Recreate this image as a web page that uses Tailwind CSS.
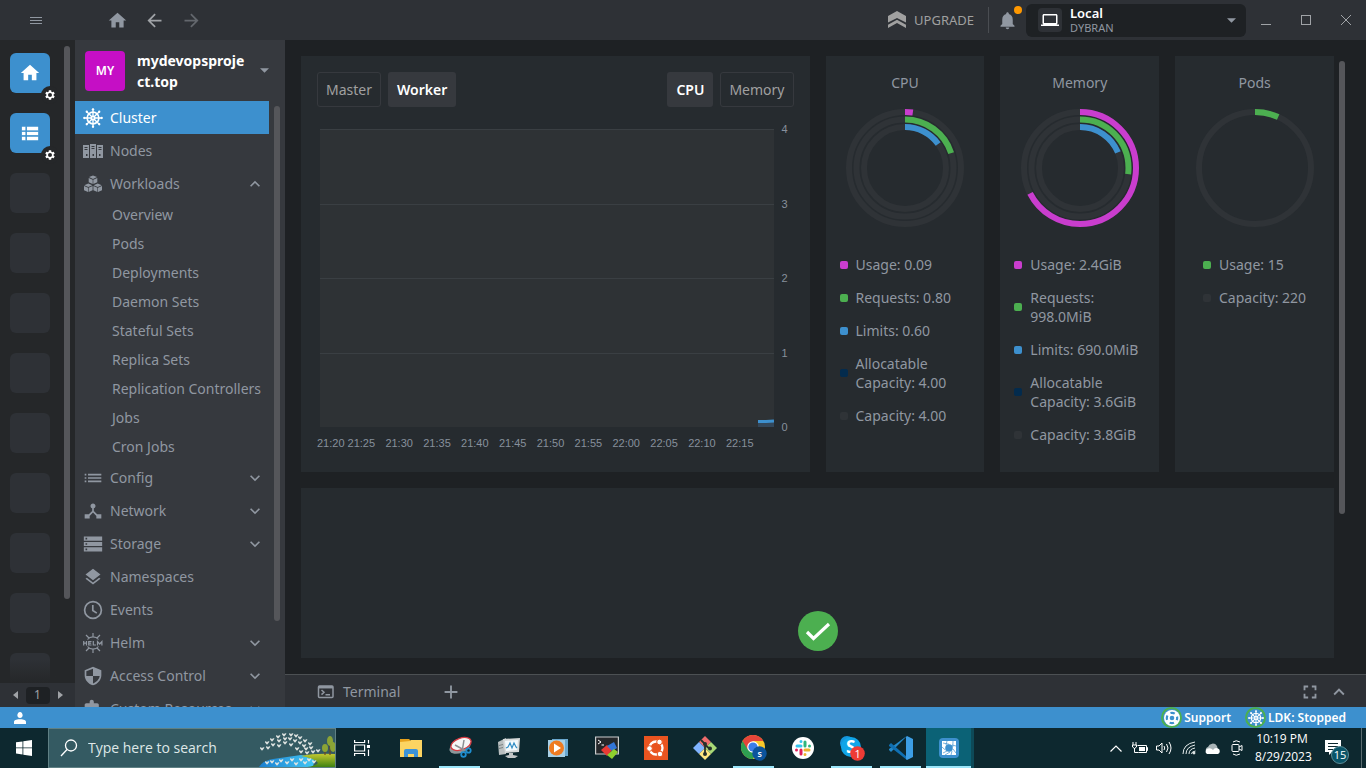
<!DOCTYPE html>
<html lang="en">
<head>
<meta charset="utf-8">
<title>Lens - mydevopsproject.top</title>
<script src="https://cdn.jsdelivr.net/npm/@tailwindcss/browser@4"></script>
</head>
<body class="flex h-screen flex-col overflow-hidden bg-[#1e2124] font-['Noto_Sans',sans-serif] text-sm text-[#9097a1]">

<svg class="hidden" aria-hidden="true">
  <symbol id="home" viewBox="0 0 24 24"><path d="M10 20v-6h4v6h5v-8h3L12 3 2 12h3v8z"/></symbol>
  <symbol id="gear" viewBox="0 0 24 24"><path fill-rule="evenodd" d="M19.14 12.94c.04-.3.06-.61.06-.94 0-.32-.02-.64-.07-.94l2.03-1.58c.18-.14.23-.41.12-.61l-1.92-3.32c-.12-.22-.37-.29-.59-.22l-2.39.96c-.5-.38-1.03-.7-1.62-.94l-.36-2.54c-.04-.24-.24-.41-.48-.41h-3.84c-.24 0-.43.17-.47.41l-.36 2.54c-.59.24-1.13.57-1.62.94l-2.39-.96c-.22-.08-.47 0-.59.22L2.74 8.87c-.12.21-.08.47.12.61l2.03 1.58c-.05.3-.09.63-.09.94s.02.64.07.94l-2.03 1.58c-.18.14-.23.41-.12.61l1.92 3.32c.12.22.37.29.59.22l2.39-.96c.5.38 1.03.7 1.62.94l.36 2.54c.05.24.24.41.48.41h3.84c.24 0 .44-.17.47-.41l.36-2.54c.59-.24 1.13-.56 1.62-.94l2.39.96c.22.08.47 0 .59-.22l1.92-3.32c.12-.22.07-.47-.12-.61l-2.01-1.58zM12 16a4 4 0 1 0 0-8 4 4 0 0 0 0 8z"/></symbol>
  <symbol id="list-view" viewBox="0 0 24 24"><path d="M4 14h4v-4H4v4zm0 5h4v-4H4v4zM4 9h4V5H4v4zm5 5h12v-4H9v4zm0 5h12v-4H9v4zM9 5v4h12V5H9z"/><path class="stroke-[#3d90ce]" stroke-width="1.200" d="M4 9.500h17M4 14.500h17M8.500 5v14"/></symbol>
  <symbol id="down" viewBox="0 0 24 24"><path d="M7.41 8.59L12 13.17l4.59-4.58L18 10l-6 6-6-6 1.41-1.41z"/></symbol>
  <symbol id="up" viewBox="0 0 24 24"><path d="M7.41 15.41L12 10.83l4.59 4.58L18 14l-6-6-6 6z"/></symbol>
  <symbol id="caret" viewBox="0 0 8 4"><path d="M0 0h8L4 4z"/></symbol>
  <symbol id="wheel" viewBox="0 0 24 24">
    <g fill="none" stroke="currentColor" stroke-width="2"><circle cx="12" cy="12" r="7"/><circle cx="12" cy="12" r="2"/>
    <path stroke-width="1.600" d="M12 1v9M12 14v9M1 12h9M14 12h9M4.200 4.200l6.400 6.400M13.400 13.400l6.400 6.400M19.800 4.200l-6.400 6.400M10.600 13.400l-6.400 6.400"/></g>
    <g><circle cx="12" cy="1.600" r="1.400"/><circle cx="12" cy="22.400" r="1.400"/><circle cx="1.600" cy="12" r="1.400"/><circle cx="22.400" cy="12" r="1.400"/><circle cx="4.500" cy="4.500" r="1.400"/><circle cx="19.500" cy="4.500" r="1.400"/><circle cx="4.500" cy="19.500" r="1.400"/><circle cx="19.500" cy="19.500" r="1.400"/></g>
  </symbol>
</svg>

<header class="flex h-10 shrink-0 items-center bg-[#2e3136] text-[#9097a1]">
  <button aria-label="Menu" class="ml-[30px] flex size-3 flex-col justify-center gap-[2px]"><span class="h-px w-full bg-current"></span><span class="h-px w-full bg-current"></span><span class="h-px w-full bg-current"></span></button>
  <button aria-label="Home" class="ml-[65px]"><svg class="size-[21px] fill-current"><use href="#home"/></svg></button>
  <button aria-label="Back" class="ml-4 text-[#a0a3a7]"><svg class="size-[21px] fill-current" viewBox="0 0 24 24"><path d="M20 11H7.830l5.590-5.590L12 4l-8 8 8 8 1.410-1.410L7.830 13H20v-2z"/></svg></button>
  <button aria-label="Forward" class="ml-4 text-[#63676d]"><svg class="size-[21px] fill-current" viewBox="0 0 24 24"><path d="M12 4l-1.410 1.410L16.170 11H4v2h12.170l-5.580 5.590L12 20l8-8z"/></svg></button>
  <div class="flex-1"></div>
  <button class="flex items-center gap-2 text-[13px] text-[#a0a0a0]"><svg class="size-[18px] fill-current" viewBox="0 0 18 18"><path d="M9 0l9 5v6.500L9 7l-9 4.500V5zM9 8.800l9 5V17l-9-5-9 5v-3.200z"/></svg>UPGRADE</button>
  <div class="ml-3.5 h-[26px] w-px bg-[#4a4d52]"></div>
  <button aria-label="Notifications" class="relative ml-2"><svg class="size-[21px] fill-current" viewBox="0 0 24 24"><path d="M12 22c1.100 0 2-.9 2-2h-4c0 1.100.890 2 2 2zm6-6v-5c0-3.070-1.640-5.640-4.500-6.320V4c0-.830-.670-1.500-1.500-1.500s-1.500.670-1.500 1.500v.680C7.630 5.360 6 7.920 6 11v5l-2 2v1h16v-1l-2-2z"/></svg><span class="absolute -top-1 right-[-4px] size-2 rounded-full bg-[#ff9800]"></span></button>
  <button class="ml-2 flex h-[33px] w-[220px] items-center rounded-md bg-[#1e2124] pr-2.5 pl-3 text-left">
    <span class="flex size-6 items-center justify-center rounded bg-[#2e3136] text-white"><svg class="size-[18px] fill-current" viewBox="0 0 24 24"><path d="M20 18c1.100 0 2-.9 2-2V6c0-1.100-.9-2-2-2H4c-1.100 0-2 .9-2 2v10c0 1.100.9 2 2 2H0v2h24v-2h-4zM4 6h16v10H4V6z"/></svg></span>
    <span class="ml-2 flex-1"><span class="block text-[13px] leading-4 font-semibold text-white">Local</span><span class="block text-[11px] leading-[14px]">DYBRAN</span></span>
    <svg class="h-[5px] w-[9px] fill-current"><use href="#caret"/></svg>
  </button>
  <button aria-label="Minimize" class="ml-[15px] flex size-2.5 items-end"><span class="h-px w-full bg-[#a0a3a7]"></span></button>
  <button aria-label="Maximize" class="ml-[30px] size-2.5 border border-[#a0a3a7]"></button>
  <button aria-label="Close" class="mr-[15px] ml-[30px]"><svg class="size-2.5 stroke-[#a0a3a7]" viewBox="0 0 10 10"><path d="M0 0l10 10M10 0L0 10"/></svg></button>
</header>

<div class="flex min-h-0 flex-1">
  <aside class="flex w-[75px] shrink-0 flex-col bg-[#252729]">
    <div class="flex min-h-0 flex-1 justify-between overflow-hidden pr-[5px] pl-2.5">
      <div class="relative flex flex-col gap-5 overflow-hidden pt-[13px] pr-[7px]">
        <div class="relative size-10 shrink-0"><button aria-label="Catalog" class="flex size-10 items-center justify-center rounded-md bg-[#3d90ce] text-white"><svg class="size-[22px] fill-current"><use href="#home"/></svg></button><span class="absolute right-[-9px] bottom-[-11px] flex size-[18px] items-center justify-center rounded-full bg-[#252729]"><svg class="size-3 fill-white"><use href="#gear"/></svg></span></div>
        <div class="relative size-10 shrink-0"><button aria-label="Cluster list" class="flex size-10 items-center justify-center rounded-md bg-[#3d90ce] text-white"><svg class="size-[23px] fill-current" viewBox="0 0 24 24"><use href="#list-view" x="-1" width="24" height="24"/></svg></button><span class="absolute right-[-9px] bottom-[-11px] flex size-[18px] items-center justify-center rounded-full bg-[#252729]"><svg class="size-3 fill-white"><use href="#gear"/></svg></span></div>
        <div class="size-10 shrink-0 rounded-md bg-[#2e3136]"></div>
        <div class="size-10 shrink-0 rounded-md bg-[#2e3136]"></div>
        <div class="size-10 shrink-0 rounded-md bg-[#2e3136]"></div>
        <div class="size-10 shrink-0 rounded-md bg-[#2e3136]"></div>
        <div class="size-10 shrink-0 rounded-md bg-[#2e3136]"></div>
        <div class="size-10 shrink-0 rounded-md bg-[#2e3136]"></div>
        <div class="size-10 shrink-0 rounded-md bg-[#2e3136]"></div>
        <div class="size-10 shrink-0 rounded-md bg-[#2e3136]"></div>
        <div class="size-10 shrink-0 rounded-md bg-[#2e3136]"></div>
        <div class="absolute inset-x-0 bottom-0 h-6 bg-gradient-to-t from-[#252729] to-transparent"></div>
      </div>
      <div class="mt-1.5 h-[86%] w-1.5 rounded-full bg-[#55565a]"></div>
    </div>
    <div class="flex h-6 items-center justify-center gap-2 bg-[#2e3136] text-[#a0a3a7]">
      <button aria-label="Previous"><svg class="h-2 w-[5px] fill-current" viewBox="0 0 5 8"><path d="M5 0v8L0 4z"/></svg></button>
      <span class="flex h-[17px] w-6 items-center justify-center rounded bg-[#1e2124] text-xs">1</span>
      <button aria-label="Next"><svg class="h-2 w-[5px] fill-current" viewBox="0 0 5 8"><path d="M0 0v8l5-4z"/></svg></button>
    </div>
  </aside>

  <nav class="flex w-[210px] shrink-0 flex-col bg-[#36393e]">
    <button class="flex h-[61px] shrink-0 items-center px-2.5 text-left text-white">
      <span class="flex size-10 items-center justify-center rounded bg-[#c50fc5] text-xs font-semibold">MY</span>
      <span class="ml-3 w-[112px] text-sm leading-[21px] font-bold break-all">mydevopsproject.top</span>
      <svg class="ml-[11px] h-[5px] w-[9px] fill-[#9097a1]"><use href="#caret"/></svg>
    </button>
    <div class="flex min-h-0 flex-1 justify-between overflow-hidden pr-[5px]">
      <div class="w-[194px]">
        <a href="#" class="flex h-[33px] items-center bg-[#3d90ce] px-2 text-white"><svg class="size-5 fill-current"><use href="#wheel"/></svg><span class="ml-[7px]">Cluster</span></a>
        <a href="#" class="flex h-[33px] items-center px-2"><svg class="size-5 fill-current" viewBox="0 0 20 20"><path fill-rule="evenodd" d="M0 4h6v13H0zM7 3h6v14H7zM14 4h6v13h-6zM1.500 6v1h3V6zM1.500 8v1h3V8zM8.500 5v1h3V5zM8.500 7v1h3V7zM15.500 6v1h3V6zM15.500 8v1h3V8zM3 13v2h1.500v-2zM9.500 13v2H11v-2zM16 13v2h1.500v-2z"/></svg><span class="ml-[7px]">Nodes</span></a>
        <a href="#" class="flex h-[33px] items-center px-2"><svg class="size-5 fill-current" viewBox="0 0 20 20"><path d="M10 1.500l4 1.600-4 1.800-4-1.800zM5.700 4l4 1.800v4.300l-4-1.800zM14.300 4l-4 1.800v4.300l4-1.800zM5.300 9.500l4 1.700-4 1.800-4-1.800zM1 12l4 1.800V18l-4-1.800zM9.600 12l-4 1.800V18l4-1.800zM14.700 9.500l4 1.700-4 1.800-4-1.800zM10.400 12l4 1.800V18l-4-1.800zM19 12l-4 1.800V18l4-1.800z"/></svg><span class="ml-[7px] flex-1">Workloads</span><svg class="mr-[-4px] size-5 fill-current"><use href="#up"/></svg></a>
        <div class="flex flex-col pl-[37px] whitespace-nowrap">
          <a href="#" class="h-[29px] leading-[29px]">Overview</a>
          <a href="#" class="h-[29px] leading-[29px]">Pods</a>
          <a href="#" class="h-[29px] leading-[29px]">Deployments</a>
          <a href="#" class="h-[29px] leading-[29px]">Daemon Sets</a>
          <a href="#" class="h-[29px] leading-[29px]">Stateful Sets</a>
          <a href="#" class="h-[29px] leading-[29px]">Replica Sets</a>
          <a href="#" class="h-[29px] leading-[29px]">Replication Controllers</a>
          <a href="#" class="h-[29px] leading-[29px]">Jobs</a>
          <a href="#" class="h-[29px] leading-[29px]">Cron Jobs</a>
        </div>
        <a href="#" class="flex h-[33px] items-center px-2"><svg class="size-5 fill-current" viewBox="0 0 24 24"><path d="M2 13h2v-2H2v2zm0 4h2v-2H2v2zm0-8h2V7H2v2zm4 4h16v-2H6v2zm0 4h16v-2H6v2zM6 7v2h16V7H6z"/></svg><span class="ml-[7px] flex-1">Config</span><svg class="mr-[-4px] size-5 fill-current"><use href="#down"/></svg></a>
        <a href="#" class="flex h-[33px] items-center px-2"><svg class="size-5 fill-current" viewBox="0 0 24 24"><path d="M17 16l-4-4V8.820C14.160 8.400 15 7.300 15 6c0-1.660-1.340-3-3-3S9 4.340 9 6c0 1.300.840 2.400 2 2.820V12l-4 4H2v5h6v-3.050l4-4.200 4 4.200V21h6v-5h-5z"/></svg><span class="ml-[7px] flex-1">Network</span><svg class="mr-[-4px] size-5 fill-current"><use href="#down"/></svg></a>
        <a href="#" class="flex h-[33px] items-center px-2"><svg class="size-5 fill-current" viewBox="0 0 24 24"><path fill-rule="evenodd" d="M1 21h22v-5H1v5zm2-3.500h2v2H3v-2zM1 3v5h22V3H1zm4 3.500H3v-2h2v2zM1 14.500h22v-5H1v5zM3 11h2v2H3v-2z"/></svg><span class="ml-[7px] flex-1">Storage</span><svg class="mr-[-4px] size-5 fill-current"><use href="#down"/></svg></a>
        <a href="#" class="flex h-[33px] items-center px-2"><svg class="size-5 fill-current" viewBox="0 0 24 24"><path d="M11.990 18.540l-7.370-5.730L3 14.070l9 7 9-7-1.630-1.270-7.380 5.740zM12 16l7.360-5.730L21 9l-9-7-9 7 1.630 1.270L12 16z"/></svg><span class="ml-[7px]">Namespaces</span></a>
        <a href="#" class="flex h-[33px] items-center px-2"><svg class="size-5" viewBox="0 0 20 20" fill="none" stroke="currentColor" stroke-width="1.700"><circle cx="10" cy="10" r="8.400"/><path d="M9.800 5v5.500l4 2.600"/></svg><span class="ml-[7px]">Events</span></a>
        <a href="#" class="flex h-[33px] items-center px-2"><svg class="size-5" viewBox="0 0 20 20" fill="none" stroke="currentColor" stroke-width="1.200"><path d="M4.500 6.500a7 7 0 0 1 11 0M4.500 13.500a7 7 0 0 0 11 0M10 0v4M10 16v4M3 2l3 3M17 2l-3 3M3 18l3-3M17 18l-3-3M.700 8v4.500M3.500 8v4.500M.700 10.200h2.800M8.500 8.500H5.700v3.500h2.800M5.700 10.200h2.500M10.300 8v4h2.700M14.500 12.500V8.500l2.200 2.500 2.200-2.500v4"/></svg><span class="ml-[7px] flex-1">Helm</span><svg class="mr-[-4px] size-5 fill-current"><use href="#down"/></svg></a>
        <a href="#" class="flex h-[33px] items-center px-2"><svg class="size-5 fill-current" viewBox="0 0 24 24"><path d="M12 1L2 5v6c0 5.550 4.340 10.740 10 12 5.660-1.260 10-6.450 10-12V5L12 1zm0 10.990h8c-.530 4.120-4.280 7.790-8 8.940V12H4V6.300l8-3.110v8.800z"/></svg><span class="ml-[7px] flex-1">Access Control</span><svg class="mr-[-4px] size-5 fill-current"><use href="#down"/></svg></a>
        <a href="#" class="flex h-[33px] items-center px-2"><svg class="size-5 fill-current" viewBox="0 0 24 24"><path d="M20.500 11H19V7c0-1.100-.9-2-2-2h-4V3.500C13 2.120 11.880 1 10.500 1S8 2.120 8 3.500V5H4c-1.100 0-1.990.9-1.990 2v3.800H3.500c1.490 0 2.700 1.210 2.700 2.700s-1.210 2.700-2.700 2.700H2V20c0 1.100.9 2 2 2h15v-6h1.500c1.380 0 2.500-1.120 2.500-2.500S21.880 11 20.500 11z"/></svg><span class="ml-[7px] flex-1">Custom Resources</span><svg class="mr-[-4px] size-5 fill-current"><use href="#down"/></svg></a>
      </div>
      <div class="mt-[5px] h-[85%] w-1.5 rounded-full bg-[#55565a]"></div>
    </div>
  </nav>

  <div class="flex min-w-0 flex-1 flex-col">
    <main class="flex min-h-0 flex-1 overflow-hidden">
      <div class="flex min-w-0 flex-1 flex-col gap-4 py-4 pl-4">
        <div class="grid h-[416px] shrink-0 grid-cols-2 gap-4">
          <section class="flex flex-col bg-[#262b2f] p-4">
            <div class="flex gap-[7px] text-[#a0a0a0]">
              <button class="h-[35px] rounded-[3px] border border-[#36393e] px-2">Master</button>
              <button class="h-[35px] rounded-[3px] bg-[#36393e] px-[9px] font-semibold text-white">Worker</button>
              <span class="flex-1"></span>
              <button class="h-[35px] rounded-[3px] bg-[#36393e] px-[9px] font-semibold text-white">CPU</button>
              <button class="h-[35px] rounded-[3px] border border-[#36393e] px-2">Memory</button>
            </div>
            <div class="mt-[22px] flex h-[298px] pl-[3px] font-['Liberation_Sans',sans-serif] text-[11px] text-[#87909c]">
              <div class="flex flex-1 flex-col bg-[#2e3235]">
                <div class="flex-1 border-t border-[#3a3f43]"></div>
                <div class="flex-1 border-t border-[#3a3f43]"></div>
                <div class="flex-1 border-t border-[#3a3f43]"></div>
                <div class="flex flex-1 items-end justify-end border-t border-[#3a3f43]">
                  <svg class="h-2 w-4" viewBox="0 0 16 8"><path fill="#33475a" d="M0 3h16v5H0z"/><path fill="none" stroke="#3d90ce" stroke-width="3" d="M0 2.500h8L16 2"/></svg>
                </div>
              </div>
              <div class="-my-1.5 ml-2 flex w-3 flex-col justify-between leading-3"><span>4</span><span>3</span><span>2</span><span>1</span><span>0</span></div>
            </div>
            <div class="mt-[9px] flex gap-[3px] pr-10 font-['Liberation_Sans',sans-serif] text-[11px] leading-[14px] text-[#87909c]">
              <span>21:20</span>
              <div class="flex flex-1 justify-between"><span>21:25</span><span>21:30</span><span>21:35</span><span>21:40</span><span>21:45</span><span>21:50</span><span>21:55</span><span>22:00</span><span>22:05</span><span>22:10</span><span>22:15</span></div>
            </div>
          </section>

          <div class="grid grid-cols-3 gap-4">
            <section class="flex flex-col items-center bg-[#262b2f] px-3.5 pt-[17px]">
              <h2 class="leading-5">CPU</h2>
              <svg class="mt-4 size-[118px]" viewBox="0 0 118 118" fill="none" stroke-width="6"><g stroke="#2f3337"><circle cx="59" cy="59" r="56"/><circle cx="59" cy="59" r="48.500"/><circle cx="59" cy="59" r="41"/></g><g transform="rotate(-90 59 59)"><circle cx="59" cy="59" r="56" stroke="#c93dce" pathLength="100" stroke-dasharray="2.250 100"/><circle cx="59" cy="59" r="48.500" stroke="#4caf50" pathLength="100" stroke-dasharray="20 100"/><circle cx="59" cy="59" r="41" stroke="#3d90ce" pathLength="100" stroke-dasharray="15 100"/></g></svg>
              <ul class="mt-7 flex w-full flex-col gap-3.5 leading-[19px]">
                <li class="flex items-center gap-2"><span class="size-2 shrink-0 rounded-[2px] bg-[#c93dce]"></span>Usage: 0.09</li>
                <li class="flex items-center gap-2"><span class="size-2 shrink-0 rounded-[2px] bg-[#4caf50]"></span>Requests: 0.80</li>
                <li class="flex items-center gap-2"><span class="size-2 shrink-0 rounded-[2px] bg-[#3d90ce]"></span>Limits: 0.60</li>
                <li class="flex items-center gap-2"><span class="size-2 shrink-0 rounded-[2px] bg-[#032b4d]"></span>Allocatable Capacity: 4.00</li>
                <li class="flex items-center gap-2"><span class="size-2 shrink-0 rounded-[2px] bg-[#2f3337]"></span>Capacity: 4.00</li>
              </ul>
            </section>
            <section class="flex flex-col items-center bg-[#262b2f] px-3.5 pt-[17px]">
              <h2 class="leading-5">Memory</h2>
              <svg class="mt-4 size-[118px]" viewBox="0 0 118 118" fill="none" stroke-width="6"><g stroke="#2f3337"><circle cx="59" cy="59" r="56"/><circle cx="59" cy="59" r="48.500"/><circle cx="59" cy="59" r="41"/></g><g transform="rotate(-90 59 59)"><circle cx="59" cy="59" r="56" stroke="#c93dce" pathLength="100" stroke-dasharray="67.500 100"/><circle cx="59" cy="59" r="48.500" stroke="#4caf50" pathLength="100" stroke-dasharray="27 100"/><circle cx="59" cy="59" r="41" stroke="#3d90ce" pathLength="100" stroke-dasharray="18.800 100"/></g></svg>
              <ul class="mt-7 flex w-full flex-col gap-3.5 leading-[19px]">
                <li class="flex items-center gap-2"><span class="size-2 shrink-0 rounded-[2px] bg-[#c93dce]"></span>Usage: 2.4GiB</li>
                <li class="flex items-center gap-2"><span class="size-2 shrink-0 rounded-[2px] bg-[#4caf50]"></span>Requests: 998.0MiB</li>
                <li class="flex items-center gap-2"><span class="size-2 shrink-0 rounded-[2px] bg-[#3d90ce]"></span>Limits: 690.0MiB</li>
                <li class="flex items-center gap-2"><span class="size-2 shrink-0 rounded-[2px] bg-[#032b4d]"></span>Allocatable Capacity: 3.6GiB</li>
                <li class="flex items-center gap-2"><span class="size-2 shrink-0 rounded-[2px] bg-[#2f3337]"></span>Capacity: 3.8GiB</li>
              </ul>
            </section>
            <section class="flex flex-col items-center bg-[#262b2f] px-3.5 pt-[17px]">
              <h2 class="leading-5">Pods</h2>
              <svg class="mt-4 size-[118px]" viewBox="0 0 118 118" fill="none" stroke-width="6"><circle cx="59" cy="59" r="56" stroke="#2f3337"/><circle cx="59" cy="59" r="56" stroke="#4caf50" pathLength="100" stroke-dasharray="6.800 100" transform="rotate(-90 59 59)"/></svg>
              <ul class="mt-7 flex flex-col gap-3.5 leading-[19px]">
                <li class="flex items-center gap-2"><span class="size-2 shrink-0 rounded-[2px] bg-[#4caf50]"></span>Usage: 15</li>
                <li class="flex items-center gap-2"><span class="size-2 shrink-0 rounded-[2px] bg-[#2f3337]"></span>Capacity: 220</li>
              </ul>
            </section>
          </div>
        </div>
        <section class="flex min-h-0 flex-1 items-end justify-center bg-[#262b2f] pb-[7px]">
          <svg class="size-10" viewBox="0 0 40 40"><circle cx="20" cy="20" r="20" fill="#4caf50"/><path d="M9 21l6.500 6.500L31 13" fill="none" stroke="#fff" stroke-width="3.200"/></svg>
        </section>
      </div>
      <div class="mt-[21px] mr-[21px] ml-[5px] h-[453px] w-1.5 rounded-full bg-[#55565a]"></div>
    </main>
    <div class="flex h-[33px] shrink-0 items-center border-t border-[#4c5053] bg-[#2e3136] pt-px">
      <button class="ml-8 flex items-center gap-2"><svg class="size-[18px]" viewBox="0 0 18 18" fill="none" stroke="currentColor" stroke-width="1.500"><rect x="1.500" y="3" width="14.500" height="11.500" rx="1"/><path stroke-width="2.500" d="M1.500 4.200H16"/><path d="M4.500 7L7 9.300 4.500 11.600M8.500 11.800H13"/></svg>Terminal</button>
      <button aria-label="New tab" class="ml-10"><svg class="size-[22px] fill-current" viewBox="0 0 24 24"><path d="M19 13h-6v6h-2v-6H5v-2h6V5h2v6h6v2z"/></svg></button>
      <span class="flex-1"></span>
      <button aria-label="Fullscreen"><svg class="size-[22px] fill-current" viewBox="0 0 24 24"><path d="M7 14H5v5h5v-2H7v-3zm-2-4h2V7h3V5H5v5zm12 7h-3v2h5v-5h-2v3zM14 5v2h3v3h2V5h-5z"/></svg></button>
      <button aria-label="Expand" class="mr-4 ml-[7px]"><svg class="size-[22px] fill-current"><use href="#up"/></svg></button>
    </div>
  </div>
</div>

<footer class="flex h-[21px] shrink-0 items-center bg-[#3d90ce] text-xs font-semibold text-white">
  <button aria-label="Account" class="ml-3"><svg class="size-4 fill-current" viewBox="0 0 24 24"><path d="M12 12c2.210 0 4-1.790 4-4s-1.790-5-4-5-4 2.790-4 5 1.790 4 4 4zm0 2c-2.670 0-9 .340-9 4v3h18v-3c0-3.660-6.330-4-9-4z"/></svg></button>
  <span class="flex-1"></span>
  <button class="flex items-center gap-0.5"><span class="flex size-[21px] items-center justify-center rounded-full border-2 border-[#4caf50]"><svg class="size-4" viewBox="0 0 16 16"><circle cx="8" cy="8" r="8" fill="#fff"/><circle cx="8" cy="8" r="5.200" fill="none" stroke="#3d90ce" stroke-width="2.200" stroke-dasharray="4.500 3.670" stroke-dashoffset="2.250"/><circle cx="8" cy="8" r="2.300" fill="#3d90ce"/></svg></span>Support</button>
  <button class="mr-5 ml-[14px] flex items-center gap-0.5"><span class="flex size-[21px] items-center justify-center rounded-full border-2 border-[#4caf50]"><svg class="size-4 fill-current"><use href="#wheel"/></svg></span>LDK: Stopped</button>
</footer>

<div class="flex h-10 shrink-0 bg-[#0d282f] font-['Open_Sans',sans-serif] text-white">
  <button aria-label="Start" class="flex w-12 items-center justify-center"><svg class="size-4 fill-white" viewBox="0 0 16 16"><path d="M0 2.300L6.500 1.400v6.100H0zM7.300 1.300L16 0v7.500H7.300zM0 8.300h6.500v6.200L0 13.600zM7.300 8.300H16V16l-8.700-1.300z"/></svg></button>
  <label class="flex w-72 items-center overflow-hidden border border-[#5f8084] bg-[#345a62]">
    <svg class="ml-[11px] size-[18px] shrink-0" viewBox="0 0 18 18" fill="none" stroke="#fff" stroke-width="1.300"><circle cx="11" cy="6.500" r="5.500"/><path d="M7 10.500L1 17"/></svg>
    <input aria-label="Search" placeholder="Type here to search" class="ml-2.5 min-w-0 flex-1 bg-transparent text-sm placeholder:text-[#dfe8e8]">
    <svg class="h-[38px] w-[76px] shrink-0" viewBox="0 0 76 38">
      <defs>
        <linearGradient id="hill" x2="0" y2="1"><stop stop-color="#c3c92f"/><stop offset="1" stop-color="#3f8212"/></linearGradient>
        <linearGradient id="lake"><stop stop-color="#1b7fd0"/><stop offset="1" stop-color="#43c8f5"/></linearGradient>
        <marker id="bird" markerUnits="userSpaceOnUse" markerWidth="6" markerHeight="6" refX="2.500" refY="2"><path fill="#dfe4e2" d="M0 .500l1.500-.2 1 1 1-1 1.500.2-1 1.500-1.500 1.800L1 2z"/></marker>
      </defs>
      <path fill="url(#lake)" d="M0 38q3-6 14-8l28-4 14 2-2 10z"/>
      <path fill="url(#hill)" d="M42 27q14-3 34-2v13H48q8-1 11-4-2-3-6-4-5-2-11-3z"/>
      <path stroke="#6d4a20" stroke-width="1.200" d="M71 26V14M66 26v-6"/>
      <g fill="#8ba435"><ellipse cx="71" cy="12" rx="3" ry="5"/><ellipse cx="66" cy="19" rx="3" ry="4"/><ellipse cx="74" cy="18" rx="3" ry="5"/></g>
      <polyline fill="none" marker-mid="url(#bird)" points="0,20 3,20 8,14 9,19 13,11 14,16 19,8 20,12 20,17 25,6 26,10 26,14 32,6 31,10 32,16 37,7 36,12 38,20 41,9 41,14 46,12 45,17 42,23 47,20 48,24 51,15 52,19 54,23 59,22 60,22"/>
      <polyline fill="none" marker-mid="url(#bird)" points="0,36 8,34 13,33 18,35 22,32 28,34 33,31 37,35 42,31 46,34 50,31 55,33 60,33"/>
    </svg>
  </label>
  <div class="ml-px flex">
    <button aria-label="Task view" class="flex w-[49px] items-center justify-center"><svg class="size-4" viewBox="0 0 16 16" fill="none" stroke="#fff" stroke-width="1.200"><path d="M.600 0v2.500h10V0M.600 16v-2.500h10V16M.600 5h10v6H.600zM14.500 0v3.500M14.500 9.500V16"/><path fill="#fff" d="M13.500 5.500h2v2h-2z"/></svg></button>
    <button aria-label="File Explorer" class="flex w-[49px] items-center justify-center"><svg class="h-5 w-[22px]" viewBox="0 0 22 20"><path fill="#e8a21c" d="M0 1h9l2 2v4H0z"/><path fill="#fcd462" d="M0 4l10-1 1-1h11v17H0z"/><path fill="#3c93d8" d="M4 19v-6q0-2 2-2h10q2 0 2 2v6h-4v-3H8v3z"/></svg></button>
    <button aria-label="Snipping Tool" class="relative flex w-[49px] items-center justify-center"><svg class="size-6" viewBox="0 0 24 24"><ellipse cx="12" cy="11" rx="11" ry="6" fill="#8d989b" transform="rotate(-20 12 11)"/><ellipse cx="13" cy="8" rx="10.500" ry="5.800" fill="#f5f5f5" stroke="#d73b42" stroke-width="1.300" transform="rotate(-20 13 8)"/><path d="M16 4l-2 12M7 9l11 6" stroke="#8b8f92" stroke-width="1.500"/><g fill="none" stroke="#1e8ed0" stroke-width="1.800"><circle cx="15.500" cy="18.500" r="2.300"/><circle cx="20.500" cy="14.500" r="2.200"/></g></svg><span class="absolute inset-x-1 bottom-0 h-0.5 bg-[#9be6fa]"></span></button>
    <button aria-label="Performance Monitor" class="flex w-[49px] items-center justify-center"><svg class="size-6" viewBox="0 0 24 24"><path fill="#b9bfc0" d="M1 6l8-4v16l-7 1z"/><path fill="#7b8283" d="M2 9l4-1v1l-4 1zM2 12l4-1v1l-4 1z"/><path fill="#d7dada" d="M6 3l17-1-1 14-14 1z"/><path fill="#f3fafd" d="M8 5l13-1-1 10-11 1z"/><path fill="none" stroke="#328dc4" stroke-width="1.200" d="M9 12l2-1 2-4 2 5 2-5 2 4 1 1"/><path fill="#c2c6c7" d="M12 17h4v2l5 1-3 2h-7l-3-2 4-1z"/></svg></button>
    <button aria-label="Media Player" class="flex w-[49px] items-center justify-center"><svg class="size-[22px]" viewBox="0 0 22 22"><path fill="#6aa8cf" d="M5 2h16v17H5z"/><path fill="#a8d0e6" d="M1 3h17v17H1z"/><circle cx="9.500" cy="11" r="7.500" fill="#ee7b22"/><path fill="#fff" d="M7 6.500l7 4.500-7 4.500z"/></svg></button>
    <button aria-label="MobaXterm" class="flex w-[49px] items-center justify-center"><svg class="size-6" viewBox="0 0 24 24"><path fill="#24272a" stroke="#c9cccd" stroke-width="1.200" d="M.600 1h22.800v17H.600z"/><path d="M3 4l3 2-3 2M6.500 9H9" stroke="#fff" fill="none"/><path fill="#e93a35" d="M6 14l6-5 5 5-5 6z"/><path fill="#3275d8" d="M12 10l7-4 3 6-5 3z"/><path fill="#8ed02e" d="M12 19l7-6 4 3-6 7z"/></svg></button>
    <button aria-label="Ubuntu" class="flex w-[49px] items-center justify-center"><svg class="size-6" viewBox="0 0 24 24"><path fill="#e95420" d="M0 0h24v24H0z"/><circle cx="12" cy="12" r="6.500" fill="none" stroke="#fff" stroke-width="2.300"/><g fill="#fff" stroke="#e95420" stroke-width="1"><circle cx="5.500" cy="12.500" r="2.800"/><circle cx="15.500" cy="6" r="2.800"/><circle cx="16" cy="18" r="2.800"/></g></svg></button>
    <button aria-label="Git Bash" class="flex w-[49px] items-center justify-center"><svg class="size-6" viewBox="0 0 24 24"><path fill="#ee6c6c" d="M12 0l6 6-6 6-6-6z"/><path fill="#80b3ff" d="M6 6l6 6-6 6-6-6z"/><path fill="#a8d977" d="M18 6l6 6-6 6-6-6z"/><path fill="#ffe680" d="M12 12l6 6-6 6-6-6z"/><path stroke="#26302b" stroke-width="1.800" fill="none" d="M8 4l4 4v11M12 9l5 4"/><g fill="#26302b"><circle cx="12" cy="8" r="2"/><circle cx="12" cy="18" r="2"/><circle cx="17" cy="12.500" r="2"/></g></svg></button>
    <button aria-label="Chrome" class="relative flex w-[49px] items-center justify-center"><svg class="size-[26px]" viewBox="0 0 26 26"><circle cx="12" cy="12" r="12" fill="#fbc829"/><path fill="#2f9f51" d="M12 24A12 12 0 0 1 1.600 6L12 12l3 6z"/><path fill="#e5453a" d="M1.600 6A12 12 0 0 1 22.400 6H12l-5 9z"/><circle cx="12" cy="12" r="5.800" fill="#fff"/><circle cx="12" cy="12" r="4.600" fill="#3b7de8"/><circle cx="18.500" cy="18.500" r="7.200" fill="#0c549c"/><text x="16.500" y="22" font-size="9" font-weight="600" fill="#fff">s</text></svg><span class="absolute inset-x-1 bottom-0 h-0.5 bg-[#9be6fa]"></span></button>
    <button aria-label="Slack" class="flex w-[49px] items-center justify-center"><svg class="size-[22px]" viewBox="0 0 22 22"><circle cx="11" cy="11" r="11" fill="#fff"/><g stroke-width="3" stroke-linecap="round"><path stroke="#36c5f0" d="M9 4.500v0M5 9h4"/><path stroke="#2eb67d" d="M13 5v4M17.500 9v0"/><path stroke="#ecb22e" d="M13 13h4M13 17.500v0"/><path stroke="#e01e5a" d="M9 13v4M4.500 13v0"/></g></svg></button>
    <button aria-label="Skype" class="relative flex w-[49px] items-center justify-center"><svg class="size-[26px]" viewBox="0 0 26 26"><circle cx="8" cy="8" r="7" fill="#1596dc"/><circle cx="16" cy="16" r="7" fill="#1596dc"/><circle cx="12" cy="12" r="10" fill="#10a5e8"/><text x="7" y="18" font-size="17" font-weight="700" fill="#fff">S</text><circle cx="18.500" cy="18.500" r="7.300" fill="#ee3b35"/><text x="15.500" y="22.500" font-size="11" fill="#fff">1</text></svg><span class="absolute inset-x-1 bottom-0 h-0.5 bg-[#9be6fa]"></span></button>
    <button aria-label="Visual Studio Code" class="relative flex w-[49px] items-center justify-center"><svg class="size-6" viewBox="0 0 24 24"><path fill="#2489ca" d="M18 0L5 13l-3 3-2-2v-1L15 2z"/><path fill="#1070b3" d="M0 9l2-2 16 14v3L0 10z"/><path fill="#3c9ee5" d="M18 0l6 3v18l-6 3-1-1V1z"/></svg><span class="absolute inset-x-1 bottom-0 h-0.5 bg-[#9be6fa]"></span></button>
    <button aria-label="Lens" class="relative ml-px flex w-12 items-center justify-center border-r-[3px] border-[#0d4a58] bg-[#0b6276]"><svg class="size-5" viewBox="0 0 20 20"><rect width="20" height="20" rx="4" fill="#3d90ce"/><path fill="#fff" d="M3 3h14v14H3z"/><circle cx="10" cy="10" r="3.800" fill="#3d90ce"/><path stroke="#3d90ce" stroke-width=".7" fill="none" d="M10 6.200L4 5M13.800 9L14 3M14 11l3 4M11 14l-5 3M6.300 12L3 9M7 7L8 3M13 7l4 1M8 13l-4 2M13 13l-1 4"/></svg><span class="absolute inset-x-0 bottom-0 h-0.5 bg-[#9be6fa]"></span></button>
  </div>
  <div class="flex flex-1 items-center justify-end">
    <button aria-label="Show hidden icons"><svg class="h-[7px] w-3" viewBox="0 0 12 7" fill="none" stroke="#fff" stroke-width="1.200"><path d="M.500 6.500L6 1l5.500 5.500"/></svg></button>
    <svg class="ml-2.5 h-3 w-4" viewBox="0 0 16 12" fill="none" stroke="#fff"><path d="M5.500 3.500h9v7h-8M14.500 5.500h1v3h-1M1 0v3M4 0v3M.500 3h4v2l-2 1.500-2-1.500zM2.500 6v4.500h4"/><path fill="#fff" stroke="none" d="M7 5h6v4H7z"/></svg>
    <svg class="ml-2 h-3.5 w-4" viewBox="0 0 16 14" fill="none" stroke="#fff"><path d="M.500 5v4H3l3 3V2L3 5zM8 5q1.500 2 0 4M10.500 3q3 4 0 8M13 1q4 6 0 12"/></svg>
    <svg class="ml-2.5 h-3.5 w-[15px]" viewBox="0 0 15 14" fill="none" stroke="#e6ecec"><path d="M1 13Q1 3 13 1M4 13q0-7 9-9M7 13q0-5 6-6M9.500 13q0-2.500 4-3"/><circle cx="12" cy="12" r="1" fill="#fff"/></svg>
    <svg class="ml-2 h-[11px] w-4" viewBox="0 0 16 11"><path fill="#aab5b8" d="M1 8a3 3 0 0 1 2-4 5 5 0 0 1 9-1l1 4z"/><path fill="#fff" d="M2 11a3 3 0 0 1 1-5.500q3-1 5 1.500 2-3 5-1.500a3 3 0 0 1 0 5.500z"/></svg>
    <svg class="ml-2.5 h-4 w-3" viewBox="0 0 12 16" fill="none" stroke="#fff"><rect x="1" y="4.500" width="7" height="7" rx="1"/><path d="M8 7l3-1.500v5L8 9M2 2q3-2.500 7 0M2 14q3 2.500 7 0"/></svg>
    <div class="ml-3 w-[54px] text-center text-xs leading-[18px] whitespace-nowrap"><div>10:19 PM</div><div>8/29/2023</div></div>
    <button aria-label="Notifications, 15 new" class="relative mr-5 ml-4"><svg class="size-4" viewBox="0 0 16 16"><path fill="#fff" d="M0 0h16v12H7l-3 3v-3H0z"/><path stroke="#0d282f" d="M3 3.500h10M3 6.500h10M3 9.500h5"/></svg><span class="absolute top-[6px] left-[6px] flex size-[18px] items-center justify-center rounded-full border border-[#5b8d98] bg-[#0a5468] text-[11px]">15</span></button>
    <span class="mr-1 h-full w-px bg-[#5a6c70]"></span>
  </div>
</div>
</body>
</html>
